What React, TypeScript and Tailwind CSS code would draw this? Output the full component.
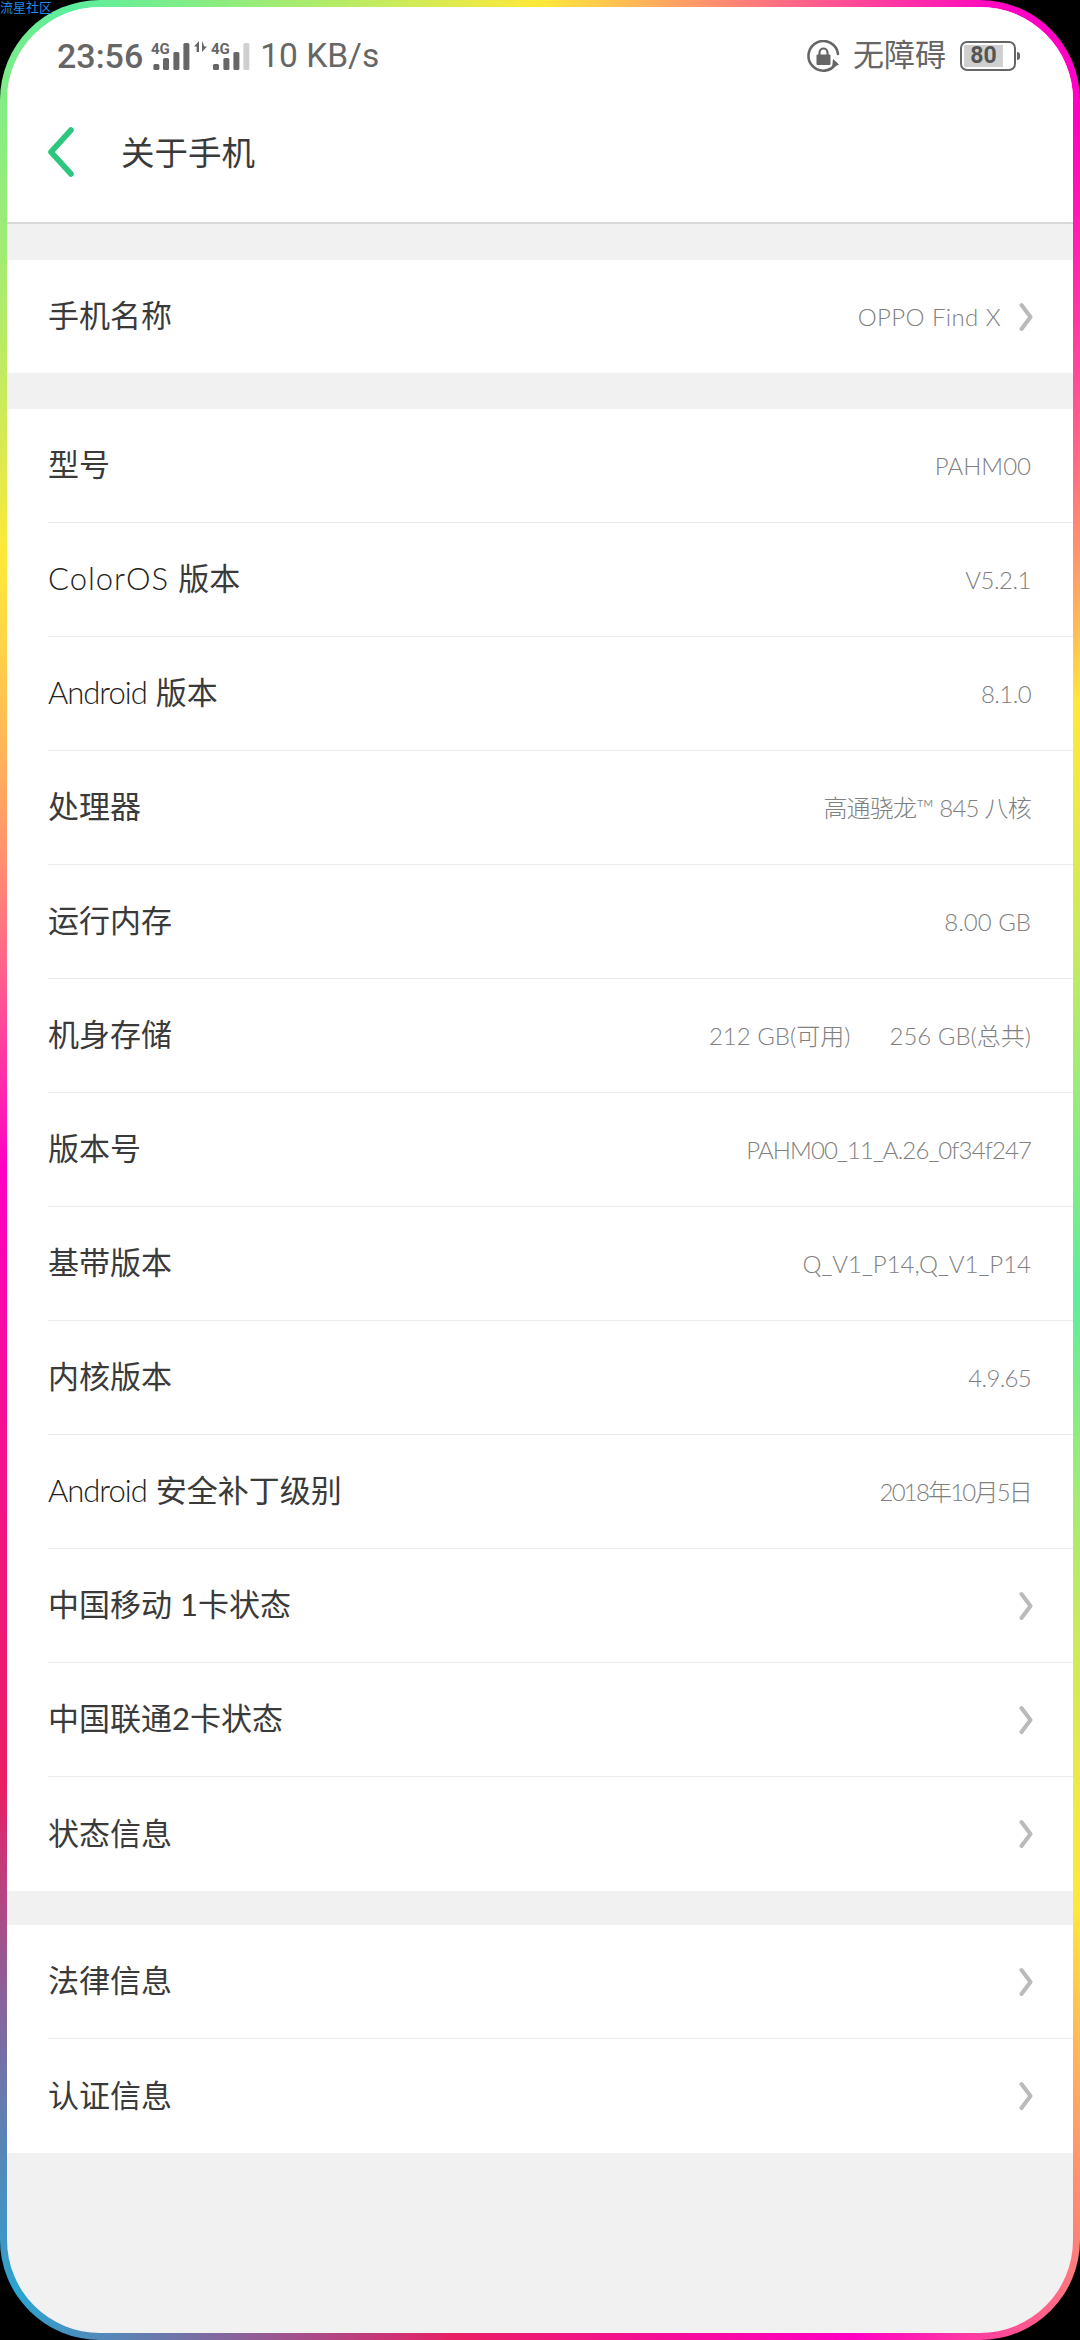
type RowItem = {
  label: string;
  latin?: string;
  latinClass?: string;
  value?: string;
  valueClass?: string;
  arrow?: boolean;
};

const modelRows: RowItem[] = [
  { label: "型号", value: "PAHM00" },
  { label: "版本", latin: "ColorOS", latinClass: "tracking-[1px]", value: "V5.2.1", valueClass: "tracking-[-0.5px]" },
  { label: "版本", latin: "Android", latinClass: "tracking-[-1px]", value: "8.1.0", valueClass: "tracking-[-0.6px]" },
  { label: "处理器", value: "高通骁龙™ 845 八核", valueClass: "tracking-[-0.75px]" },
  { label: "运行内存", value: "8.00 GB" },
  { label: "机身存储", value: "212 GB(可用)      256 GB(总共)" },
  { label: "版本号", value: "PAHM00_11_A.26_0f34f247", valueClass: "tracking-[-0.9px]" },
  { label: "基带版本", value: "Q_V1_P14,Q_V1_P14" },
  { label: "内核版本", value: "4.9.65", valueClass: "tracking-[-0.7px]" },
  { label: "安全补丁级别", latin: "Android", latinClass: "tracking-[-1px]", value: "2018年10月5日", valueClass: "tracking-[-1.8px]" },
  { label: "中国移动 1卡状态", arrow: true },
  { label: "中国联通2卡状态", arrow: true },
  { label: "状态信息", arrow: true },
];

const legalRows: RowItem[] = [
  { label: "法律信息", arrow: true },
  { label: "认证信息", arrow: true },
];

function Chevron() {
  return (
    <svg width="14" height="30" viewBox="0 0 14 30" fill="none" className="shrink-0">
      <path d="M2.5 3l9 12-9 12" stroke="#bababa" strokeWidth="4" strokeLinecap="round" strokeLinejoin="round" />
    </svg>
  );
}

function Row({ item, last }: { item: RowItem; last?: boolean }) {
  return (
    <div className={`ml-[41px] flex h-[114px] items-center justify-between pr-[40px] ${last ? "" : "border-b border-[#ebebeb]"}`}>
      <span className="pb-[2px] text-[31px] text-[#3a3a3a]">
        {item.latin && <span className={`mr-[9px] font-light text-[#222222] ${item.latinClass}`}>{item.latin}</span>}
        {item.label}
      </span>
      {item.value && (
        <span className={`mr-[2px] whitespace-pre text-[24px] font-light text-[#808080] ${item.valueClass ?? ""}`}>{item.value}</span>
      )}
      {item.arrow && <Chevron />}
    </div>
  );
}

// signal bars for the two sim slots, with the data arrows between them
function SignalIcons() {
  return (
    <svg width="100" height="32" viewBox="0 0 100 32" fill="#666666">
      <text x="1" y="14" fontFamily="Roboto" fontWeight="700" fontSize="15">4G</text>
      <rect x="3.4" y="24" width="6" height="6" rx="1.5" />
      <rect x="13" y="18" width="6" height="12" rx="1.5" />
      <rect x="23.4" y="12" width="6" height="18" rx="1.5" />
      <rect x="33.4" y="3" width="6" height="27" rx="1.5" />
      <path d="M49 1v11h-2.4V6.5L44 6.5zM52 1v11l5-5.5h-2.6z" />
      <text x="61" y="14" fontFamily="Roboto" fontWeight="700" fontSize="15">4G</text>
      <rect x="63" y="24" width="6" height="6" rx="1.5" />
      <rect x="73.4" y="18" width="6" height="12" rx="1.5" />
      <rect x="83.4" y="12" width="6" height="18" rx="1.5" />
      <rect x="93.4" y="3" width="6" height="27" rx="1.5" fill="#d0d0d0" />
    </svg>
  );
}

function RotationLock() {
  return (
    <svg width="33" height="33" viewBox="0 0 33 33" fill="none">
      <path d="M29 23.5A14.8 14.8 0 1 1 31 14" stroke="#666666" strokeWidth="2.6" strokeLinecap="round" />
      <path d="M26 19l6 5.5-7 3.5z" fill="#666666" />
      <rect x="9.5" y="14.5" width="14" height="10.5" rx="1" fill="#666666" />
      <path d="M12.5 15v-2.5a4 4 0 0 1 8 0V15" stroke="#666666" strokeWidth="2.2" />
    </svg>
  );
}

function Battery() {
  return (
    <div className="flex items-center">
      <div className="h-[30px] w-[56px] rounded-[7px] border-[2.5px] border-[#666666] p-[2px]">
        <div className="flex h-full w-[39px] items-center justify-center bg-[#cfcfcf] text-[23px] font-bold text-[#555555]">80</div>
      </div>
      <div className="ml-[1px] h-[8px] w-[3px] rounded-r-sm bg-[#666666]" />
    </div>
  );
}

export default function App() {
  return (
    <div className="relative h-[2340px] bg-black font-['Lato','Noto_Sans_CJK_SC',sans-serif]">
      <span className="absolute left-0 top-0 z-10 text-[13px] leading-[14px] text-[#1e88e5]">流星社区</span>
      <div className="h-full rounded-[100px] bg-[conic-gradient(#ffe93a_0deg,#ff00c4_22deg,#ff00c4_27deg,#ffe93a_49deg,#5aee9e_103deg,#ffe93a_144deg,#ff00c4_165deg,#ea1e63_184deg,#2aa5d0_205deg,#ea1e63_221deg,#ff00c4_270deg,#ffe93a_319deg,#5aee9e_338deg,#ffe93a_360deg)] p-[7px]">
        <div className="flex h-full flex-col overflow-hidden rounded-[93px] bg-[#f1f1f1]">
          <header className="h-[217px] shrink-0 border-b-2 border-[#d9d9d9] bg-white">
            <div className="flex h-[98px] items-center justify-between pl-[50px] pr-[53px] font-['Roboto','Noto_Sans_CJK_SC',sans-serif] text-[#666666]">
              <div className="flex items-center">
                <span className="text-[34px] font-medium">23:56</span>
                <span className="ml-[7px]"><SignalIcons /></span>
                <span className="ml-[10px] text-[33.5px]">10 KB/s</span>
              </div>
              <div className="flex items-center">
                <RotationLock />
                <span className="ml-[13px] mr-[14px] text-[31px]">无障碍</span>
                <Battery />
              </div>
            </div>
            <div className="flex h-[94px] items-center pl-[41px]">
              <svg width="26" height="50" viewBox="0 0 26 50" fill="none">
                <path d="M23 3L3 25l20 22" stroke="#2dc67f" strokeWidth="5.6" strokeLinecap="round" strokeLinejoin="round" />
              </svg>
              <h1 className="ml-[47px] text-[33.5px] font-normal text-[#3a3a3a]">关于手机</h1>
            </div>
          </header>

          <section className="mt-[36px] bg-white">
            <div className="ml-[41px] flex h-[113px] items-center justify-between pr-[40px]">
              <span className="pb-[2px] text-[31px] text-[#3a3a3a]">手机名称</span>
              <span className="flex items-center gap-[18px]">
                <span className="text-[24px] font-light tracking-[0.4px] text-[#808080]">OPPO Find X</span>
                <Chevron />
              </span>
            </div>
          </section>

          <section className="mt-[36px] bg-white">
            {modelRows.map((item, i) => (
              <Row key={`${item.latin ?? ""}${item.label}`} item={item} last={i === modelRows.length - 1} />
            ))}
          </section>

          <section className="mt-[34px] bg-white">
            {legalRows.map((item, i) => (
              <Row key={item.label} item={item} last={i === legalRows.length - 1} />
            ))}
          </section>
        </div>
      </div>
    </div>
  );
}
